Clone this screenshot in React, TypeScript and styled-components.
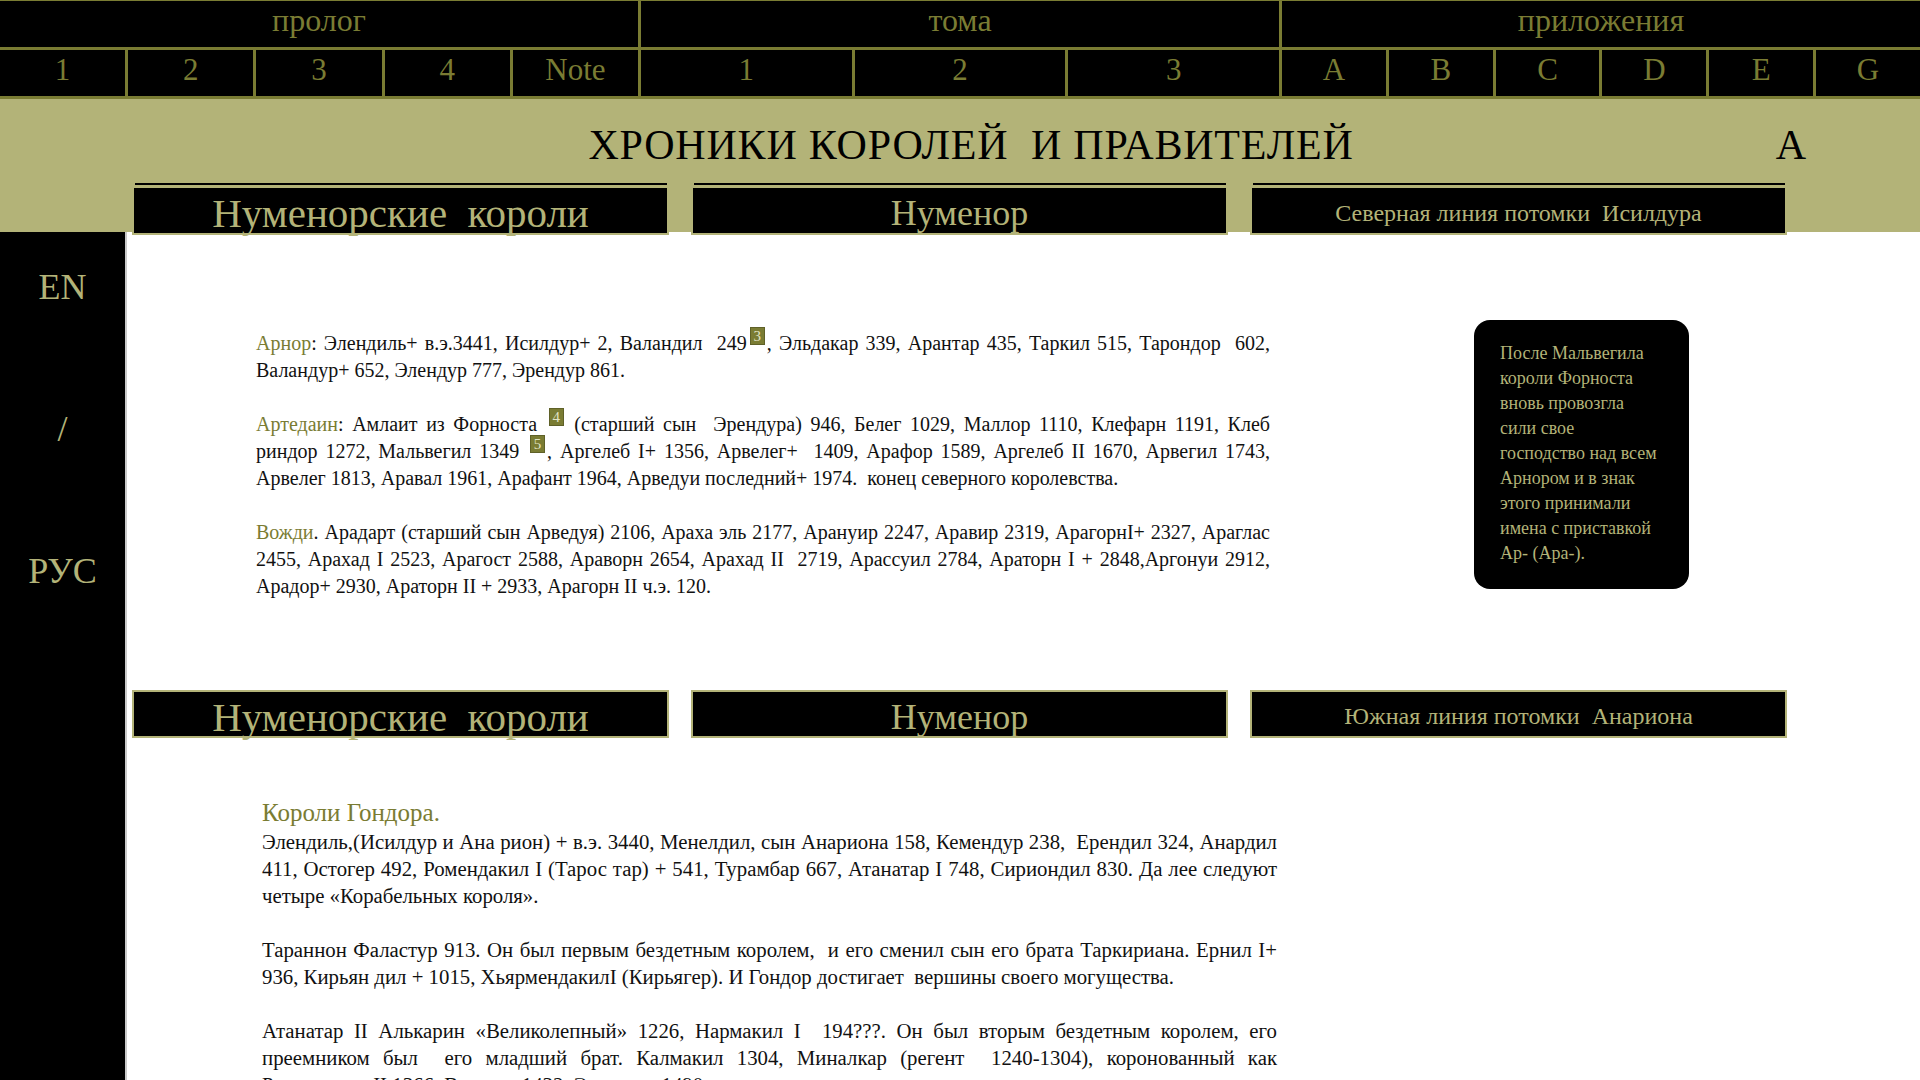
import { FC, ReactNode } from "react";
import styled, { createGlobalStyle } from "styled-components";

const OLIVE = "#7a7c33";
const SAGE = "#b3b378";

const GlobalStyle = createGlobalStyle`
  html, body {
    margin: 0;
    padding: 0;
    overflow: hidden;
    background: #fff;
  }
  body {
    font-family: "Liberation Serif", "DejaVu Serif", serif;
  }
`;

const Page = styled.div`
  width: 1920px;
  height: 1080px;
  display: flex;
  flex-direction: column;
  overflow: hidden;
`;

/* top navigation table */
const Nav = styled.nav`
  display: grid;
  grid-template-columns: repeat(3, 1fr);
  gap: 3px;
  background: ${OLIVE};
  padding: 1px 0 3px;
`;

const Group = styled.div`
  display: flex;
  flex-direction: column;
  gap: 3px;
`;

const GroupTitle = styled.div`
  height: 46px;
  box-sizing: border-box;
  padding-bottom: 7px;
  background: #000;
  color: ${OLIVE};
  font-size: 32px;
  display: flex;
  align-items: center;
  justify-content: center;
`;

const Cells = styled.div`
  display: flex;
  gap: 3px;
`;

const Cell = styled.a`
  flex: 1;
  height: 46px;
  box-sizing: border-box;
  padding-bottom: 7px;
  background: #000;
  color: ${OLIVE};
  font-size: 31px;
  text-decoration: none;
  display: flex;
  align-items: center;
  justify-content: center;
`;

/* olive banner */
const Banner = styled.header`
  position: relative;
  z-index: 1;
  height: 133px;
  box-sizing: border-box;
  padding-top: 25px;
  background: ${SAGE};
`;

const TitleRow = styled.div`
  display: grid;
  grid-template-columns: 1fr auto 1fr;
  align-items: center;
  padding-left: 136px;
  padding-right: 114px;
  font-size: 42px;
  line-height: 42px;
  color: #000;
`;

const Title = styled.h1`
  grid-column: 2;
  margin: 0;
  font-size: inherit;
  font-weight: normal;
  letter-spacing: 0.8px;
`;

const Letter = styled.span`
  grid-column: 3;
  justify-self: end;
`;

const TabRow = styled.div<{ $top?: boolean }>`
  display: grid;
  grid-template-columns: repeat(3, 537px);
  column-gap: 22px;
  margin-left: ${(p) => (p.$top ? "132px" : "0")};
  margin-top: ${(p) => (p.$top ? "20px" : "90px")};
`;

const Tab = styled.div<{ $size: number; $top?: boolean }>`
  position: relative;
  height: ${(p) => (p.$top ? "49px" : "48px")};
  box-sizing: border-box;
  padding-top: 5px;
  border: 2px solid ${SAGE};
  background: #000;
  color: ${SAGE};
  font-size: ${(p) => p.$size}px;
  display: flex;
  align-items: center;
  justify-content: center;
  white-space: pre;

  &::before {
    content: "";
    display: ${(p) => (p.$top ? "block" : "none")};
    position: absolute;
    left: 1px;
    right: 0;
    top: -5px;
    height: 2px;
    background: #000;
  }
`;

/* body */
const Body = styled.div`
  flex: 1;
  display: flex;
`;

const Sidebar = styled.aside`
  width: 125px;
  flex-shrink: 0;
  background: #000;
  border-right: 2px solid #c9c9c9;
  display: flex;
  flex-direction: column;
  align-items: center;
  gap: 99px;
  padding-top: 34px;
`;

const Lang = styled.a`
  color: ${SAGE};
  font-size: 36px;
  line-height: 43px;
  text-decoration: none;
`;

const Main = styled.main`
  flex: 1;
  padding-left: 5px;
  background: #fff;
`;

const Section = styled.section`
  display: flex;
  align-items: flex-start;
  margin-top: 88px;
`;

const Column = styled.div<{ $left: number; $width: number; $top?: number; $size: number }>`
  margin-left: ${(p) => p.$left}px;
  width: ${(p) => p.$width}px;
  padding-top: ${(p) => p.$top ?? 0}px;
  font-size: ${(p) => p.$size}px;
`;

const Para = styled.p`
  margin: 0 0 27px;
  font-size: inherit;
  line-height: 27px;
  text-align: justify;
  color: #111;

  &:last-child {
    margin-bottom: 0;
  }
`;

const Mark = styled.span`
  color: ${OLIVE};
`;

const Note = styled.span`
  display: inline-block;
  width: 13px;
  height: 16px;
  margin: -8px 2px 0 3px;
  border: 1px solid #5f6128;
  background: ${OLIVE};
  color: #e2e3c4;
  font-size: 15px;
  line-height: 16px;
  text-align: center;
  vertical-align: 9px;
`;

const Aside = styled.div`
  margin-left: 204px;
  width: 215px;
  box-sizing: border-box;
  padding: 21px 6px 23px 26px;
  border-radius: 16px;
  background: #000;
  color: ${SAGE};
  font-size: 18px;
  line-height: 25px;
  white-space: nowrap;
`;

const Heading = styled.h2`
  margin: 60px 0 0;
  font-size: 25px;
  line-height: 30px;
  font-weight: normal;
  color: ${OLIVE};
`;

const nav = [
  { title: "пролог", items: ["1", "2", "3", "4", "Note"] },
  { title: "тома", items: ["1", "2", "3"] },
  { title: "приложения", items: ["A", "B", "C", "D", "E", "G"] },
];

const Tabs: FC<{ top?: boolean; last: string }> = ({ top, last }) => (
  <TabRow $top={top}>
    <Tab $size={41} $top={top}>Нуменорские  короли</Tab>
    <Tab $size={36} $top={top}>Нуменор</Tab>
    <Tab $size={24} $top={top}>{last}</Tab>
  </TabRow>
);

const N: FC<{ children: ReactNode }> = ({ children }) => <Note>{children}</Note>;

const App: FC = () => {
  return (
    <Page>
      <GlobalStyle />
      <Nav>
        {nav.map((g) => (
          <Group key={g.title}>
            <GroupTitle>{g.title}</GroupTitle>
            <Cells>
              {g.items.map((it) => (
                <Cell key={it} href="#">
                  {it}
                </Cell>
              ))}
            </Cells>
          </Group>
        ))}
      </Nav>

      <Banner>
        <TitleRow>
          <Title>ХРОНИКИ КОРОЛЕЙ&nbsp; И ПРАВИТЕЛЕЙ</Title>
          <Letter>A</Letter>
        </TitleRow>
        <Tabs top last="Северная линия потомки  Исилдура" />
      </Banner>

      <Body>
        <Sidebar>
          <Lang href="#">EN</Lang>
          <Lang as="span">/</Lang>
          <Lang href="#">РУС</Lang>
        </Sidebar>

        <Main>
          <Section>
            <Column $left={124} $width={1014} $top={10} $size={20}>
              <Para>
                <Mark>Арнор</Mark>: Элендиль+ в.э.3441, Исилдур+ 2, Валандил&nbsp; 249<N>3</N>, Эльдакар 339,
                Арантар 435, Таркил 515, Тарондор&nbsp; 602, Валандур+ 652, Элендур 777, Эрендур 861.
              </Para>
              <Para>
                <Mark>Артедаин</Mark>: Амлаит из Форноста <N>4</N> (старший сын&nbsp; Эрендура) 946, Белег 1029,
                Маллор 1110, Клефарн 1191, Клеб риндор 1272, Мальвегил 1349 <N>5</N>, Аргелеб I+ 1356,
                Арвелег+&nbsp; 1409, Арафор 1589, Аргелеб II 1670, Арвегил 1743, Арвелег 1813, Аравал 1961,
                Арафант 1964, Арведуи последний+ 1974.&nbsp; конец северного королевства.
              </Para>
              <Para>
                <Mark>Вожди</Mark>. Арадарт (старший сын Арведуя) 2106, Араха эль 2177, Арануир 2247, Аравир
                2319, АрагорнI+ 2327, Араглас 2455, Арахад I 2523, Арагост 2588, Араворн 2654, Арахад II&nbsp;
                2719, Арассуил 2784, Араторн I + 2848,Аргонуи 2912, Арадор+ 2930, Араторн II + 2933, Арагорн
                II ч.э. 120.
              </Para>
            </Column>
            <Aside>
              После Мальвегила
              <br />
              короли Форноста
              <br />
              вновь провозгла
              <br />
              сили свое
              <br />
              господство над всем
              <br />
              Арнором и в знак
              <br />
              этого принимали
              <br />
              имена с приставкой
              <br />
              Ар- (Ара-).
            </Aside>
          </Section>

          <Tabs last="Южная линия потомки  Анариона" />

          <Column $left={130} $width={1015} $size={20.8}>
            <Heading>Короли Гондора.</Heading>
            <Para>
              Элендиль,(Исилдур и Ана рион) + в.э. 3440, Менелдил, сын Анариона 158, Кемендур 238,&nbsp;
              Ерендил 324, Анардил 411, Остогер 492, Ромендакил I (Тарос тар) + 541, Турамбар 667, Атанатар I
              748, Сириондил 830. Да лее следуют четыре «Корабельных короля».
            </Para>
            <Para>
              Тараннон Фаластур 913. Он был первым бездетным королем,&nbsp; и его сменил сын его брата
              Таркириана. Ернил I+ 936, Кирьян дил + 1015, ХьярмендакилI (Кирьягер). И Гондор достигает&nbsp;
              вершины своего могущества.
            </Para>
            <Para>
              Атанатар II Алькарин «Великолепный» 1226, Нармакил I&nbsp; 194???. Он был вторым бездетным
              королем, его преемником был&nbsp; его младший брат. Калмакил 1304, Миналкар (регент&nbsp;
              1240-1304), коронованный как Ромендакил II 1366, Валакар 1432, Эльдакар 1490.
            </Para>
          </Column>
        </Main>
      </Body>
    </Page>
  );
};

export default App;
